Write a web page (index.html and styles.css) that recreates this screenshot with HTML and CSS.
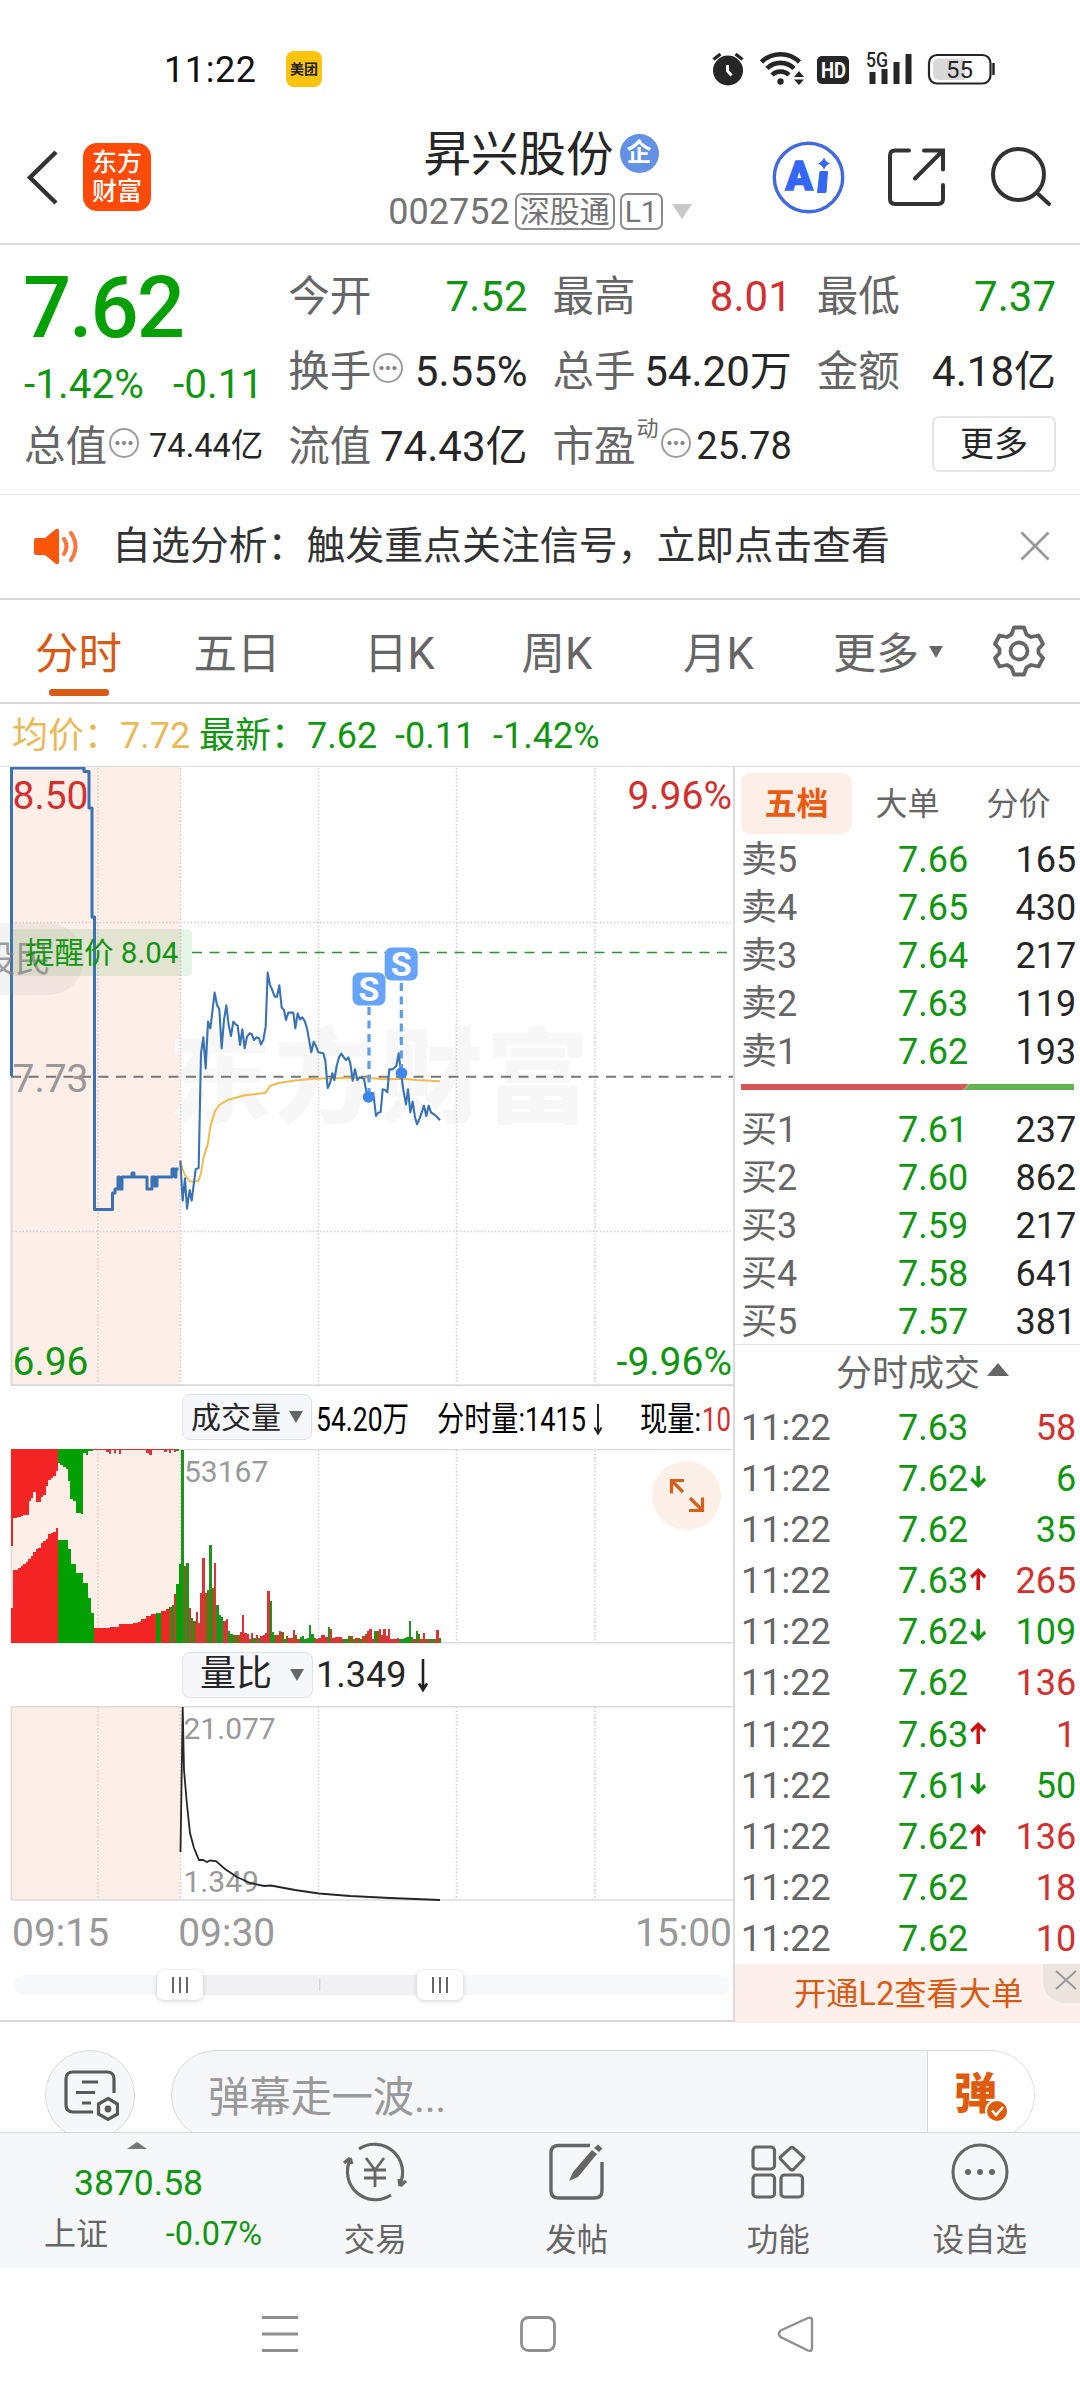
FILE: index.html
```html
<!DOCTYPE html>
<html lang="zh-CN">
<head>
<meta charset="utf-8">
<title>昇兴股份 002752</title>
<link rel="stylesheet" href="styles.css">
</head>
<body>
<header class="status">
  <span class="clock">11:22</span>
  <span class="app-chip">美团</span>
  <svg class="status-icons" width="290" height="44" viewBox="710 48 290 44">
    <g fill="#262626">
      <circle cx="728" cy="70.500" r="15"/>
      <path d="M713.500 59.500l7-5.500M742.500 59.500l-7-5.500" stroke="#262626" stroke-width="3.200" fill="none"/>
      <path d="M727.500 65v6l4 4.500" stroke="#fff" stroke-width="3" fill="none"/>
    </g>
    <g fill="none" stroke="#262626" stroke-width="4.600">
      <path d="M761.500 62a27 27 0 0 1 38 0"/><path d="M767 68.500a19 19 0 0 1 27 0"/><path d="M772 75a12 12 0 0 1 17 0"/>
    </g>
    <circle cx="780.500" cy="81.500" r="3.200" fill="#262626"/>
    <path d="M794 77l5-6 5 6zM794 79.500l5 5.500 5-5.500z" fill="#262626"/>
    <rect x="817" y="56" width="32" height="28" rx="5" fill="#262626"/>
    <text x="821" y="78" class="hd" textLength="25" lengthAdjust="spacingAndGlyphs">HD</text>
    <text x="866" y="67" class="fiveg" textLength="22" lengthAdjust="spacingAndGlyphs">5G</text>
    <path d="M872.500 72v12M884.500 69v15M896.500 62v22M908.500 54v30" stroke="#262626" stroke-width="6" fill="none"/>
    <rect x="929" y="55" width="61.500" height="28.500" rx="8" fill="#fff" stroke="#262626" stroke-width="2.200"/>
    <path d="M938 58.500h27v21.500h-27q-5-1-5-6v-10q0-5 5-5.500z" fill="#d9d9d9"/>
    <path d="M993.500 63v12" stroke="#262626" stroke-width="2.500"/>
    <text x="959.500" y="77.500" class="batt">55</text>
  </svg>
</header>

<nav class="titlebar">
  <div class="title-left">
    <svg width="34" height="60" viewBox="26 147 34 60"><path d="M56 152L30 177.500 56 203" fill="none" stroke="#333" stroke-width="4.500"/></svg>
    <span class="brand">东方<br>财富</span>
  </div>
  <div class="title-mid">
    <div class="stock-name">昇兴股份<span class="ent">企</span></div>
    <div class="stock-code"><span>002752</span><span class="tag">深股通</span><span class="tag">L1</span><i class="caret"></i></div>
  </div>
  <svg class="title-right" width="290" height="80" viewBox="765 138 290 80">
    <circle cx="808.500" cy="177.500" r="34.200" fill="none" stroke="#4169e1" stroke-width="3.400"/>
    <text x="785.500" y="189.500" class="ai">A</text>
    <path d="M820 171.500h7.500l-1.500 21h-8.500z" fill="#3467f6" stroke="#3467f6" stroke-width="1" stroke-linejoin="round"/>
    <path d="M824 157.500q1.800 4.500 6 6-4.200 1.500-6 6-1.800-4.500-6-6 4.200-1.500 6-6z" fill="#3467f6"/>
    <g fill="none" stroke="#333" stroke-width="4" stroke-linecap="round">
      <path d="M909 150.500h-14q-5 0-5 5v43.500q0 5 5 5h43q5 0 5-5v-14M924 150.500h19v19M943 150.500l-28 28"/>
      <circle cx="1018.500" cy="174.500" r="25.500"/><path d="M1037 193l12 11"/>
    </g>
  </svg>
</nav>

<section class="quote">
  <div class="last"><div class="last-price">7.62</div><div class="last-chg"><span>-1.42%</span><span>-0.11</span></div></div>
  <div class="cell"><span class="k">今开</span><b class="dn">7.52</b></div>
  <div class="cell"><span class="k">最高</span><b class="up">8.01</b></div>
  <div class="cell"><span class="k">最低</span><b class="dn">7.37</b></div>
  <div class="cell"><span class="k">换手<i class="dots"></i></span><b>5.55%</b></div>
  <div class="cell"><span class="k">总手</span><b>54.20万</b></div>
  <div class="cell"><span class="k">金额</span><b>4.18亿</b></div>
  <div class="cell"><span class="k">总值<i class="dots"></i></span><b class="small">74.44亿</b></div>
  <div class="cell"><span class="k">流值</span><b>74.43亿</b></div>
  <div class="cell"><span class="k">市盈<sup>动</sup><i class="dots"></i></span><b class="mid">25.78</b></div>
  <div class="cell end"><button class="more">更多</button></div>
</section>

<section class="notice">
  <svg width="46" height="38" viewBox="33 527 46 38"><path d="M36 538h9l11-9q3-1 3 2v31q0 3-3 2l-11-9h-9q-2 0-2-3v-11q0-3 2-3z" fill="#f9560a"/><path d="M64 539q5 7 0 15M71 533q9 13 0 27" fill="none" stroke="#f9763e" stroke-width="4" stroke-linecap="round"/></svg>
  <span class="notice-text">自选分析：触发重点关注信号，立即点击查看</span>
  <svg width="30" height="30" viewBox="0 0 30 30"><path d="M1.500 1.500l27 27M28.500 1.500l-27 27" stroke="#999" stroke-width="2.800"/></svg>
</section>

<nav class="tabs">
  <span class="tab on">分时</span><span class="tab">五日</span><span class="tab">日K</span><span class="tab">周K</span><span class="tab">月K</span>
  <span class="tab tab-more">更多<i></i></span>
  <svg class="gear" width="56" height="56" viewBox="-28 -28 56 56" fill="none" stroke="#666" stroke-width="3.800" stroke-linejoin="round"><path d="M-5-23.500H5L7.500-16.500 12-14 19.500-15.500 24-7 19.500-2V2L24 7 19.500 15.500 12 14 7.500 16.500 5 23.500H-5L-7.500 16.500-12 14-19.500 15.500-24 7-19.500 2V-2L-24-7-19.500-15.500-12-14-7.500-16.500Z"/><circle r="8.500"/></svg>
</nav>

<div class="avg"><span class="yl">均价：7.72</span><span>最新：</span><span class="a1">7.62</span><span class="a2">-0.11</span><span>-1.42%</span></div>

<main class="board">
  <div class="charts">
    <svg class="plot" width="734" height="619" viewBox="0 767 734 619">
      <rect x="12" y="767" width="168.500" height="618" fill="#fdeee7"/>
      <text x="168" y="1115" class="wm">东方财富</text>
      <g class="grid"><path d="M98 768V1385M180.500 768V1385M318.500 768V1385M456.500 768V1385M595 768V1385M12 922.500H733M12 1231.500H733"/></g>
      <path d="M11.500 767V1385M11 1385.200H733" stroke="#d9d9d9" stroke-width="2" fill="none"/>
      <path d="M11 1076.700H733" stroke="#777" stroke-width="2" stroke-dasharray="10 7.500" fill="none"/>
      <path d="M192 952.500H733" stroke="#2f9232" stroke-width="1.600" stroke-dasharray="10 7.500" fill="none"/>
      <text x="12.500" y="809" class="lab up">8.50</text>
      <text x="732" y="809" class="lab up r">9.96%</text>
      <text x="12.500" y="1092" class="lab gy">7.73</text>
      <text x="12.500" y="1375" class="lab dn">6.96</text>
      <text x="732" y="1375" class="lab dn r">-9.96%</text>
      <path d="M12 929H187q5 0 5 5v37q0 5-5 5H12z" fill="#0a9a20" fill-opacity=".11"/>
      <path d="M11.500 1076V768H84V771.500H89V808H92V917H94.500V1209.500H112.500V1193H115V1189H118V1177H119.500V1189H122V1177H132V1173H134V1177H147V1189H152V1177H155V1186H157V1177H172V1169H175V1177H176V1169H178.500" class="price" stroke-width="3"/>
      <g transform="translate(150 930) scale(.33333)">
        <path class="mean" d="M91 692L97 715 105 735 118 753 130 756 146 752 153 730 160 685 174 640 181 590 195 543 208 525 235 509 285 496 347 488 360 468 385 459 430 452 490 446 600 443 670 445 700 448 760 446 800 450 870 454"/>
        <path class="price" stroke-width="6.300" d="M91 692L98 812 105 745 111 836 119 780 125 812 137 718 146 714 153 370 160 322 167 415 174 275 181 295 194 188 201 225 208 238 215 355 222 270 229 226 236 285 243 318 250 275 257 283 263 287 270 345 277 298 284 355 291 320 299 310 305 312 312 330 320 322 327 325 333 343 340 330 347 290 353 128 360 165 366 178 374 200 381 200 388 166 395 232 402 240 408 270 415 248 430 248 436 295 443 250 450 268 457 262 464 273 471 295 484 367 491 335 498 348 505 367 520 370 526 392 533 474 540 460 547 430 553 450 560 408 567 382 574 371 582 383 588 390 595 382 601 400 608 452 615 418 622 450 629 442 642 446 648 480 654 500 661 488 670 490 678 558 685 548 692 546 698 478 705 480 712 487 718 418 728 418 739 408 746 370 753 428 760 480 768 523 774 478 781 547 788 515 795 562 801 583 809 565 822 527 829 558 836 527 843 547 856 556 870 571"/>
      </g>
      <path d="M369 1007V1094M401.300 983V1070" stroke="#5b9bf0" stroke-width="3.200" stroke-dasharray="8 5.500" fill="none"/>
      <circle cx="368.500" cy="1097" r="5.800" fill="#3d86f2"/><circle cx="401.500" cy="1073" r="5.800" fill="#3d86f2"/>
      <rect x="352.500" y="972.500" width="33" height="33" rx="7" fill="#66a3fb"/><rect x="384.700" y="947.500" width="33" height="33" rx="7" fill="#66a3fb"/>
      <text x="369" y="1001" class="sell">S</text><text x="401.200" y="976" class="sell">S</text>
      <path d="M0 923H48a36 36 0 0 1 0 72H0z" fill="#888" fill-opacity=".1"/>
      <text x="-21" y="972" class="ghost">股民</text>
      <text x="25" y="963" class="alert">提醒价 8.04</text>
    </svg>

    <div class="readout">
      <span class="pick">成交量<i></i></span>
      <svg width="421" height="50" viewBox="313 1392 421 50">
        <text x="317" y="1431" class="cond" textLength="93" lengthAdjust="spacingAndGlyphs">54.20万</text>
        <text x="438" y="1431" class="cond" textLength="149" lengthAdjust="spacingAndGlyphs">分时量:1415</text>
        <path d="M599 1404V1433M595.500 1427.500L599 1433.500 602.500 1427.500" stroke="#222" stroke-width="2" fill="none"/>
        <text x="641" y="1431" class="cond" textLength="61" lengthAdjust="spacingAndGlyphs">现量:</text>
        <text x="703" y="1431" class="cond up" textLength="29" lengthAdjust="spacingAndGlyphs">10</text>
      </svg>
    </div>

    <svg class="plot" width="734" height="195" viewBox="0 1449 734 195">
      <rect x="12" y="1449" width="168.500" height="194" fill="#fdeee7"/>
      <g class="grid"><path d="M98 1450V1643M180.500 1450V1643M318.500 1450V1643M456.500 1450V1643M595 1450V1643"/></g>
      <path d="M11 1449.500H733M11.500 1449V1643M11 1642.700H733" stroke="#dcdcdc" stroke-width="1.600" fill="none"/>
      <g id="volume"></g>
      <text x="184" y="1481.500" class="lab2">53167</text>
      <circle cx="686.500" cy="1495.500" r="34.500" fill="#fdf0e9"/>
      <path d="M684 1480.500H671.500V1493.500M672 1481L683 1492M689 1510.500H702.500V1497.500M702 1510L690 1498" stroke="#d5601d" stroke-width="3.200" fill="none"/>
    </svg>

    <div class="readout second">
      <span class="pick big">量比<i></i></span>
      <span class="ratio">1.349</span>
      <svg width="12" height="34" viewBox="0 0 12 34"><path d="M6 1V31M2 25.500L6 32 10 25.500" stroke="#222" stroke-width="2.600" fill="none"/></svg>
    </div>

    <svg class="plot" width="734" height="196" viewBox="0 1706 734 196">
      <rect x="12" y="1706" width="168.500" height="194" fill="#fdeee7"/>
      <g class="grid"><path d="M98 1707V1900M180.500 1707V1900M318.500 1707V1900M456.500 1707V1900M595 1707V1900"/></g>
      <path d="M11 1706.700H733M11.500 1706V1900M11 1900H733" stroke="#dcdcdc" stroke-width="1.600" fill="none"/>
      <text x="183.500" y="1738.500" class="lab2">21.077</text>
      <text x="183.500" y="1891.500" class="lab2">1.349</text>
      <path d="M180.500 1852L182.700 1707 184 1770 187 1805 190 1833 194 1848 199 1860 203 1860 207 1862 210 1860.500 216 1861 225 1869 237 1877 250 1883 264 1886 271 1885.500 295 1890 319 1893.500 350 1896 390 1898 440 1900" fill="none" stroke="#262626" stroke-width="1.800"/>
    </svg>

    <div class="times"><span>09:15</span><span class="t2">09:30</span><span>15:00</span></div>
    <div class="slider"><i class="range"></i><b class="handle h1"></b><b class="handle h2"></b></div>
  </div>

  <aside class="book">
    <div class="book-tabs"><span class="on">五档</span><span>大单</span><span>分价</span></div>
    <div class="lv"><span>卖5</span><b>7.66</b><em>165</em></div>
    <div class="lv"><span>卖4</span><b>7.65</b><em>430</em></div>
    <div class="lv"><span>卖3</span><b>7.64</b><em>217</em></div>
    <div class="lv"><span>卖2</span><b>7.63</b><em>119</em></div>
    <div class="lv"><span>卖1</span><b>7.62</b><em>193</em></div>
    <svg class="balance" width="333" height="6" viewBox="0 0 333 6"><path d="M0 0H228L222 6H0z" fill="#d65454"/><path d="M228.500 0H333V6H222.500z" fill="#63b350"/></svg>
    <div class="lv"><span>买1</span><b>7.61</b><em>237</em></div>
    <div class="lv"><span>买2</span><b>7.60</b><em>862</em></div>
    <div class="lv"><span>买3</span><b>7.59</b><em>217</em></div>
    <div class="lv"><span>买4</span><b>7.58</b><em>641</em></div>
    <div class="lv"><span>买5</span><b>7.57</b><em>381</em></div>
    <div class="ticks-head">分时成交<i></i></div>
    <div class="ticks">
      <div class="lv"><span>11:22</span><b>7.63</b><em class="up">58</em></div>
      <div class="lv"><span>11:22</span><b class="down">7.62</b><em class="dn">6</em></div>
      <div class="lv"><span>11:22</span><b>7.62</b><em class="dn">35</em></div>
      <div class="lv"><span>11:22</span><b class="rise">7.63</b><em class="up">265</em></div>
      <div class="lv"><span>11:22</span><b class="down">7.62</b><em class="dn">109</em></div>
      <div class="lv"><span>11:22</span><b>7.62</b><em class="up">136</em></div>
      <div class="lv"><span>11:22</span><b class="rise">7.63</b><em class="up">1</em></div>
      <div class="lv"><span>11:22</span><b class="down">7.61</b><em class="dn">50</em></div>
      <div class="lv"><span>11:22</span><b class="rise">7.62</b><em class="up">136</em></div>
      <div class="lv"><span>11:22</span><b>7.62</b><em class="up">18</em></div>
      <div class="lv"><span>11:22</span><b>7.62</b><em class="up">10</em></div>
    </div>
    <div class="l2">开通L2查看大单<span class="l2-close"><svg width="22" height="20" viewBox="0 0 22 20"><path d="M1 1l20 18M21 1L1 19" stroke="#999" stroke-width="2"/></svg></span></div>
  </aside>
</main>

<section class="danmu">
  <span class="dm-set"><svg width="56" height="54" viewBox="63 2069 56 54" fill="none" stroke="#595959" stroke-width="3.200"><path d="M114 2094V2080q0-7-7-7H73q-7 0-7 7V2106q0 7 7 7H93M82 2083H98M76 2093.500H95M82 2104H91"/><path d="M108 2099.500l9.500 5.500v10l-9.500 5.500-9.500-5.500v-10z"/><circle cx="108" cy="2110" r="1.800"/></svg></span>
  <div class="dm-input"><span class="dm-ph">弹幕走一波...</span><span class="dm-btn">弹<svg width="24" height="24" viewBox="-12 -12 24 24"><circle r="11" fill="#e05a0c" stroke="#fff" stroke-width="2"/><path d="M-5-.5L-1 4 6-4" fill="none" stroke="#fff" stroke-width="2.600"/></svg></span></div>
</section>

<footer class="bottom">
  <div class="index"><i></i><div class="idx-val">3870.58</div><div class="idx-row"><span>上证</span><span class="dn">-0.07%</span></div></div>
  <div class="item">
    <svg width="70" height="62" viewBox="-35 -31 70 62" fill="none" stroke="#666" stroke-width="3.200"><path d="M-16-23A28 28 0 0 1 25 12M25 14L31 9M25 14L24 7M16 23A28 28 0 0 1-25-12M-25-14L-31-9M-25-14L-23-8"/><path d="M-9-14L0-2 9-14M0-2V15M-11-2H11M-11 6H11" stroke-width="2.800"/></svg><span>交易</span></div>
  <div class="item">
    <svg width="70" height="62" viewBox="-35 -31 70 62" fill="none" stroke="#666" stroke-width="3.400"><path d="M13-26.500H-18q-8 0-8 7V19q0 7 8 7H17q8 0 8-7V-10"/><path d="M-8 9L-4 0 15-22 20-18 1 5z" fill="#666" stroke="none"/><path d="M17-24l4-3.500 4.500 4L22-20z" fill="#666" stroke="none"/></svg><span>发帖</span></div>
  <div class="item">
    <svg width="70" height="62" viewBox="-35 -31 70 62" fill="none" stroke="#666" stroke-width="3.200"><rect x="-25" y="-25" width="21.500" height="22" rx="3.500"/><path d="M12-23.500q2-2.500 4 0L25-15.500q1.500 1.500 0 3L16-3q-2 2-4 0L3-12.500q-1.500-1.500 0-3z"/><rect x="-25" y="3" width="21.500" height="22" rx="3.500"/><rect x="3" y="3" width="21.500" height="22" rx="3.500"/></svg><span>功能</span></div>
  <div class="item">
    <svg width="70" height="62" viewBox="-35 -31 70 62"><circle r="27" fill="none" stroke="#666" stroke-width="3"/><g fill="#666"><circle cx="-12" r="3"/><circle r="3"/><circle cx="12" r="3"/></g></svg><span>设自选</span></div>
</footer>

<nav class="sysnav">
  <svg width="560" height="44" viewBox="258 2312 560 44" fill="none" stroke="#8f8f8f" stroke-width="2.800"><path d="M262 2317.500H298M262 2334H298M262 2350.500H298"/><rect x="521.500" y="2317.500" width="33" height="33" rx="7"/><path d="M780.500 2330.500L808 2318q4-1.500 4 2.500V2348q0 4-4 2.500L780.500 2337q-3-3 0-6.500z" stroke-width="2.400"/></svg>
</nav>
<script src="volume.js"></script>
</body>
</html>
```

FILE: styles.css
```css
* { box-sizing: border-box; }
body {
  margin: 0; width: 1080px; height: 2400px; overflow: hidden; background: #fff; color: #262626;
  font-family: Roboto, "Noto Sans CJK SC", sans-serif; white-space: nowrap;
}
i, em { font-style: normal; }
b { font-weight: 400; }
svg { display: block; flex: none; }
.up { color: #d32f2f; fill: #d32f2f; }
.dn { color: #109610; fill: #109610; }

.status { height: 100px; display: flex; padding: 48px 0 0 164px; }
.clock { font-size: 36px; line-height: 44px; color: #111; width: 122px; letter-spacing: .6px; }
.app-chip { width: 36px; height: 36px; margin-top: 3px; background: #fcc40c; border-radius: 8px; font-size: 14px; font-weight: 700; line-height: 36px; text-align: center; color: #222; }
.status-icons { margin-left: 388px; }
.hd { font-size: 22px; font-weight: 700; fill: #fff; }
.fiveg { font-size: 20px; font-weight: 500; fill: #262626; }
.batt { font-size: 24px; text-anchor: middle; fill: #262626; }

.titlebar { height: 145px; border-bottom: 2px solid #dadada; display: flex; padding-right: 25px; }
.title-left { width: 360px; padding: 43px 0 0 26px; display: flex; }
.title-left svg { margin-top: 4px; }
.brand { width: 68px; height: 68px; margin-left: 23px; border-radius: 14px; background: #fd4a09; color: #fff; font-size: 25px; line-height: 29px; font-weight: 500; text-align: center; padding-top: 5px; }
.title-mid { width: 360px; padding-top: 25px; }
.stock-name { display: flex; justify-content: center; height: 58px; font-size: 47.500px; line-height: 60px; gap: 6px; padding-left: 2px; }
.ent { width: 39px; height: 39px; margin-top: 9px; border-radius: 50%; background: #6391e4; color: #fff; font-size: 25px; line-height: 38px; font-weight: 700; text-align: center; }
.stock-code { display: flex; justify-content: center; align-items: center; height: 57px; font-size: 36px; color: #737373; gap: 5px; }
.tag { height: 37px; border: 2px solid #8a8a8a; border-radius: 7px; font-size: 30px; line-height: 34px; padding: 0 3px; }
.caret { border: 10.5px solid transparent; border-top: 15px solid #c8c8c8; border-bottom: 0; margin-left: 4px; }
.title-right { margin: 38px 0 0 45px; }
.ai { font-size: 40px; font-weight: 900; fill: #3467f6; stroke: #3467f6; stroke-width: 1.5px; }

.quote { height: 249.500px; border-bottom: 1.500px solid #e6e6e6; display: grid; grid-template-columns: repeat(4, 1fr); grid-template-rows: repeat(3, 75px); column-gap: 25px; padding: 14px 24px 0 24px; }
.last { grid-row: span 2; color: #04a004; }
.last-price { font-size: 85px; line-height: 99px; font-weight: 500; letter-spacing: -2.200px; margin-left: -1px; }
.last-chg { display: flex; justify-content: space-between; font-size: 40.500px; line-height: 52px; color: #109610; }
.cell { display: flex; justify-content: space-between; align-items: center; line-height: 77px; font-size: 42px; }
.cell .k { color: #666; display: flex; align-items: center; font-size: 41.500px; }
.cell .small { font-size: 32.500px; }
.cell .mid { font-size: 38px; }
.cell sup { font-size: 22px; line-height: 24px; margin: -36px 0 0 1px; }
.dots { width: 30px; height: 30px; margin: -8px 0 0 2px; border: 2.500px solid #9c9c9c; border-radius: 50%; background: radial-gradient(circle, #888 1.800px, transparent 2.300px) center / 6.500px 6px; background-clip: content-box; padding: 10px 3px 9px; }
.end { justify-content: flex-end; }
.more { width: 124px; height: 56px; margin-top: -5px; border: 2px solid #e6e6e6; border-radius: 7px; background: #fff; font: inherit; font-size: 34px; line-height: 50px; padding: 0; color: #262626; }

.notice { height: 105px; border-bottom: 2px solid #d9d9d9; display: flex; align-items: center; padding: 0 30px 0 33px; }
.notice-text { font-size: 38.900px; line-height: 50px; color: #333; margin-left: 33px; flex: 1; }

.tabs { height: 104px; border-bottom: 2px solid #d9d9d9; display: grid; grid-template-columns: 157px 160px 165px 145px 183px 1fr 90px; align-items: center; font-size: 43.500px; color: #666; text-align: center; line-height: 109px; }
.tab { height: 102px; }
.tab.on { color: #d95a14; display: flex; flex-direction: column; align-items: center; }
.tab.on::after { content: ""; width: 60px; height: 7px; border-radius: 3px; background: #d95a14; margin-top: -20px; }
.tab:nth-child(4) { padding-left: 5px; }
.tab-more { text-align: left; padding-left: 23px; font-size: 43px; }
.tab-more i { display: inline-block; border: 7.500px solid transparent; border-top: 12px solid #666; border-bottom: 0; margin: 0 0 11px 10px; }
.gear { margin-left: 1px; }

.avg { height: 63px; border-bottom: 1.500px solid #dcdcdc; display: flex; font-size: 36px; line-height: 65px; padding-left: 12px; color: #109610; }
.yl { color: #eab957; width: 187px; }
.a1 { width: 88px; } .a2 { width: 98px; }

.board { display: flex; height: 1255px; border-bottom: 2px solid #d9d9d9; }
.charts { width: 735px; border-right: 2px solid #dcdcdc; }
.grid { stroke: #d0d0d0; stroke-width: 1.500; stroke-dasharray: 1.500 2; fill: none; }
.price { fill: none; stroke: #3a73b5; stroke-linejoin: round; }
.mean { fill: none; stroke: #f0bb50; stroke-width: 6; stroke-linejoin: round; }
.lab { font-size: 39px; }
.lab2 { font-size: 30px; fill: #999; }
.r { text-anchor: end; }
.gy { fill: #999; }
.wm { font-size: 103px; font-weight: 900; fill: #f7f7f7; letter-spacing: 3px; }
.alert { font-size: 29.500px; fill: #109610; }
.ghost { font-size: 36px; fill: #808080; fill-opacity: .75; }
.sell { font-size: 34px; font-weight: 700; fill: #fff; text-anchor: middle; }
.readout { height: 63px; display: flex; align-items: center; padding-left: 182px; }
.readout.second { height: 62px; }
.pick { width: 131px; height: 46px; border: 1.500px solid #dfe1e6; border-radius: 8px; background: #f6f7fa; font-size: 30px; line-height: 43px; display: flex; align-items: center; justify-content: space-between; padding: 0 8px; }
.pick.big { font-size: 36px; padding-left: 17px; }
.pick i { border: 7.500px solid transparent; border-top: 12px solid #666; border-bottom: 0; }
.cond { font-size: 34px; }
.ratio { font-size: 36px; margin-left: 3px; width: 101px; }
.times { height: 61px; line-height: 62px; display: flex; font-size: 39px; color: #999; padding: 0 1px 0 12px; }
.times .t2 { margin-left: 69px; flex: 1; }
.slider { position: relative; height: 20px; margin: 12px 3px 0 14px; border-radius: 10px; background: #f7f8fa; }
.range { display: block; width: 260px; height: 20px; margin-left: 166px; background: linear-gradient(#d9d9dc, #d9d9dc) 139px 4px / 1.500px 12px no-repeat #f1f1f4; }
.handle { position: absolute; top: -5px; width: 46px; height: 30px; border-radius: 7px; background: repeating-linear-gradient(90deg, #666 0 2px, transparent 2px 7px) 15px 7px / 16px 16px no-repeat #fff; box-shadow: 0 1px 5px rgba(0,0,0,.18); }
.h1 { left: 143px; } .h2 { left: 403px; }

.book { flex: 1; display: flex; flex-direction: column; }
.book-tabs { display: flex; height: 69px; padding: 6px 0 0 6px; font-size: 32px; line-height: 63px; color: #666; }
.book-tabs span { width: 111px; height: 61px; text-align: center; margin-right: -1px; }
.book-tabs .on { background: #fdeee7; color: #ea5b12; font-weight: 700; border-radius: 9px; margin-right: 0; }
.book-tabs span:last-child { margin-left: 1px; }
.lv { height: 48.100px; line-height: 52px; display: grid; grid-template-columns: 157px 1fr 90px; padding: 0 6px 0 6px; font-size: 36px; }
.lv span { color: #666; }
.lv b { color: #109610; display: flex; }
.lv em { text-align: right; }
.balance { margin: 10px 0 14px 6px; }
.ticks-head { height: 60px; border-top: 1.500px solid #e3e3e3; font-size: 36px; line-height: 58px; color: #666; padding-left: 101px; display: flex; }
.ticks-head i { height: 0; border: 11px solid transparent; border-bottom: 13px solid #666; border-top: 0; margin: 18px 0 0 7px; }
.ticks .lv { height: 51.100px; line-height: 53px; }
.ticks .lv:first-child { margin-top: -1.500px; }
.rise::after, .down::after { content: ""; width: 16px; height: 22px; margin: 13px 0 0 2px; background: currentColor; clip-path: polygon(39% 0, 61% 0, 61% 72%, 87% 51%, 100% 65%, 50% 100%, 0 65%, 13% 51%, 39% 72%); }
.lv .rise::after { background: #cf1010; transform: scaleY(-1); }
.l2 { position: relative; margin-top: auto; height: 59px; line-height: 60px; background: #fdf0ea; color: #d95a14; font-size: 32.300px; padding-left: 59px; }
.l2-close { position: absolute; right: 0; top: 0; width: 39px; height: 39px; border-bottom-left-radius: 22px; background: #eee4de; padding: 6px 0 0 12px; }

.danmu { height: 110px; overflow: hidden; display: flex; padding: 28px 45px 0; gap: 36px; }
.dm-set { width: 90px; height: 90px; border: 1.500px solid #d8dadd; border-radius: 50%; background: #f6f7f9; padding: 17px 0 0 17px; flex: none; }
.dm-input { flex: 1; height: 90px; border: 1.500px solid #d8dadd; border-radius: 45px; background: #f6f7f9; overflow: hidden; display: flex; font-size: 41.500px; line-height: 93px; color: #999; }
.dm-ph { flex: 1; padding-left: 36px; letter-spacing: -.3px; }
.dm-btn { width: 107px; background: #fff; border-left: 1.500px solid #d8dadd; color: #e05a0c; font-weight: 900; font-size: 43px; line-height: 87px; padding-left: 26px; position: relative; }
.dm-btn svg { position: absolute; left: 57px; top: 48px; }

.bottom { height: 136px; border-top: 1.500px solid #d6d8dc; background: #f6f7f9; display: flex; color: #666; }
.index { width: 274px; }
.index > i { display: block; width: 0; border: 10.500px solid transparent; border-bottom: 7px solid #777; border-top: 0; margin: 9px 0 0 127px; }
.idx-val { color: #109610; font-size: 35.500px; line-height: 50px; padding-left: 74px; margin-top: 9px; }
.idx-row { display: flex; justify-content: space-between; padding: 0 12px 0 44px; font-size: 32px; line-height: 52px; }
.idx-row .dn { font-size: 32.500px; }
.item { width: 201.500px; padding-left: 1px; display: flex; flex-direction: column; align-items: center; font-size: 31.500px; line-height: 44px; }
.item svg { margin: 8px 0 16px; }
.sysnav { padding: 44px 0 0 258px; }
```

FILE: volume.js
```js
// Opening auction and minute volume. Values are thirds of a pixel.
var RED = '#f22424', GREEN = '#02a002', R = '#db3434', G = '#1b951b', O = '#806315';
var TOP = 58, BASE = 638, out = [];
function bar(x0, x1, y0, y1, c) {
  out.push('<rect x="' + x0 + '" y="' + y0 + '" width="' + (x1 - x0) + '" height="' + (y1 - y0) + '" fill="' + c + '"/>');
}
function steps(list, end, color, hang) {
  for (var i = 0; i < list.length; i++) {
    var x1 = i + 1 < list.length ? list[i + 1][0] : end;
    if (hang) bar(list[i][0], x1, TOP, list[i][1], color);
    else bar(list[i][0], x1, list[i][1], BASE, color);
  }
}
steps([[32,349],[40,265],[50,262],[62,259],[70,255],[86,213],[92,205],[100,187],[107,216],[123,202],[130,195],[138,167],[145,150],[152,143],[160,138],[168,122]], 175, RED, true);
steps([[175,98],[181,104],[190,110],[197,116],[204,152],[211,208],[219,213],[227,250],[242,252],[250,70],[258,75],[265,62]], 280, GREEN, true);
steps([[280,61],[319,67],[326,72],[334,61],[342,70],[349,61],[357,72],[364,61],[380,59],[388,61],[439,68],[446,76],[455,60],[492,66],[500,60],[508,68],[514,61],[522,66]], 529, R, true);
bar(529, 537, TOP, 64, G);
steps([[32,535],[40,420],[54,415],[62,408],[70,402],[77,397],[84,388],[92,378],[100,366],[107,357],[115,354],[122,338],[130,333],[138,328],[145,313],[152,310],[160,306],[167,294]], 175, RED);
steps([[175,329],[205,357],[213,402],[228,428],[250,458],[265,505],[273,549]], 281, GREEN);
steps([[281,594],[330,590],[357,583],[400,580],[415,575],[424,568],[438,558],[453,552]], 468, RED);
[[468,484,548,GREEN],[484,497,543,RED],[497,508,536,RED],[508,516,532,O],[516,522,525,G],[522,529,493,R],[529,537,462,GREEN],[537,544,402,GREEN],[544,552,60,G],[552,558,408,O],[558,566,398,G],[566,573,535,R],[573,580,563,G],[580,587,572,O],[587,594,546,R],[594,600,578,R],[600,606,488,R],[606,614,383,R],[614,621,488,O],[621,627,480,O],[627,635,345,G],[635,641,475,O],[641,649,399,R],[649,656,525,G],[656,663,556,G],[663,670,561,G],[670,677,574,R],[677,684,567,R]]
  .forEach(function (b) { bar(b[0], b[1], b[2], BASE, b[3]); });
('g35 g26 o23 o22 o24 r33 r82 r28 r26 o12 r29 g15 r22 g14 r20 r22 r28 r155 g124 g32 o22 r24 r36 o31 g12 o20 r14 r14 r38 o22 r10 g18 g20 g10 g14 g52 g26 o15 r12 r14 r22 r24 r18 g46 r41 r14 r16 r16 r16 o10 g12 g12 o20 o20 g12 r14 o15 g12 r20 o26 r36 r41 r10 g34 o36 r40 r22 r40 r20 r42 r12 r12 r10 r14 g10 g12 g14 g16 g64 g18 r12 g34 o26 r10 r30 g10 r10 g12 g10 r12 r38 g14').split(' ').forEach(function (s, i) {
  var x = 684 + i * 6.95;
  bar(x, x + 6.95, BASE - Number(s.slice(1)), BASE, { r: R, g: G, o: O }[s[0]]);
});
var g = document.getElementById('volume');
g.setAttribute('transform', 'translate(0 1430) scale(.33333)');
g.setAttribute('shape-rendering', 'crispEdges');
g.innerHTML = out.join('');
```
